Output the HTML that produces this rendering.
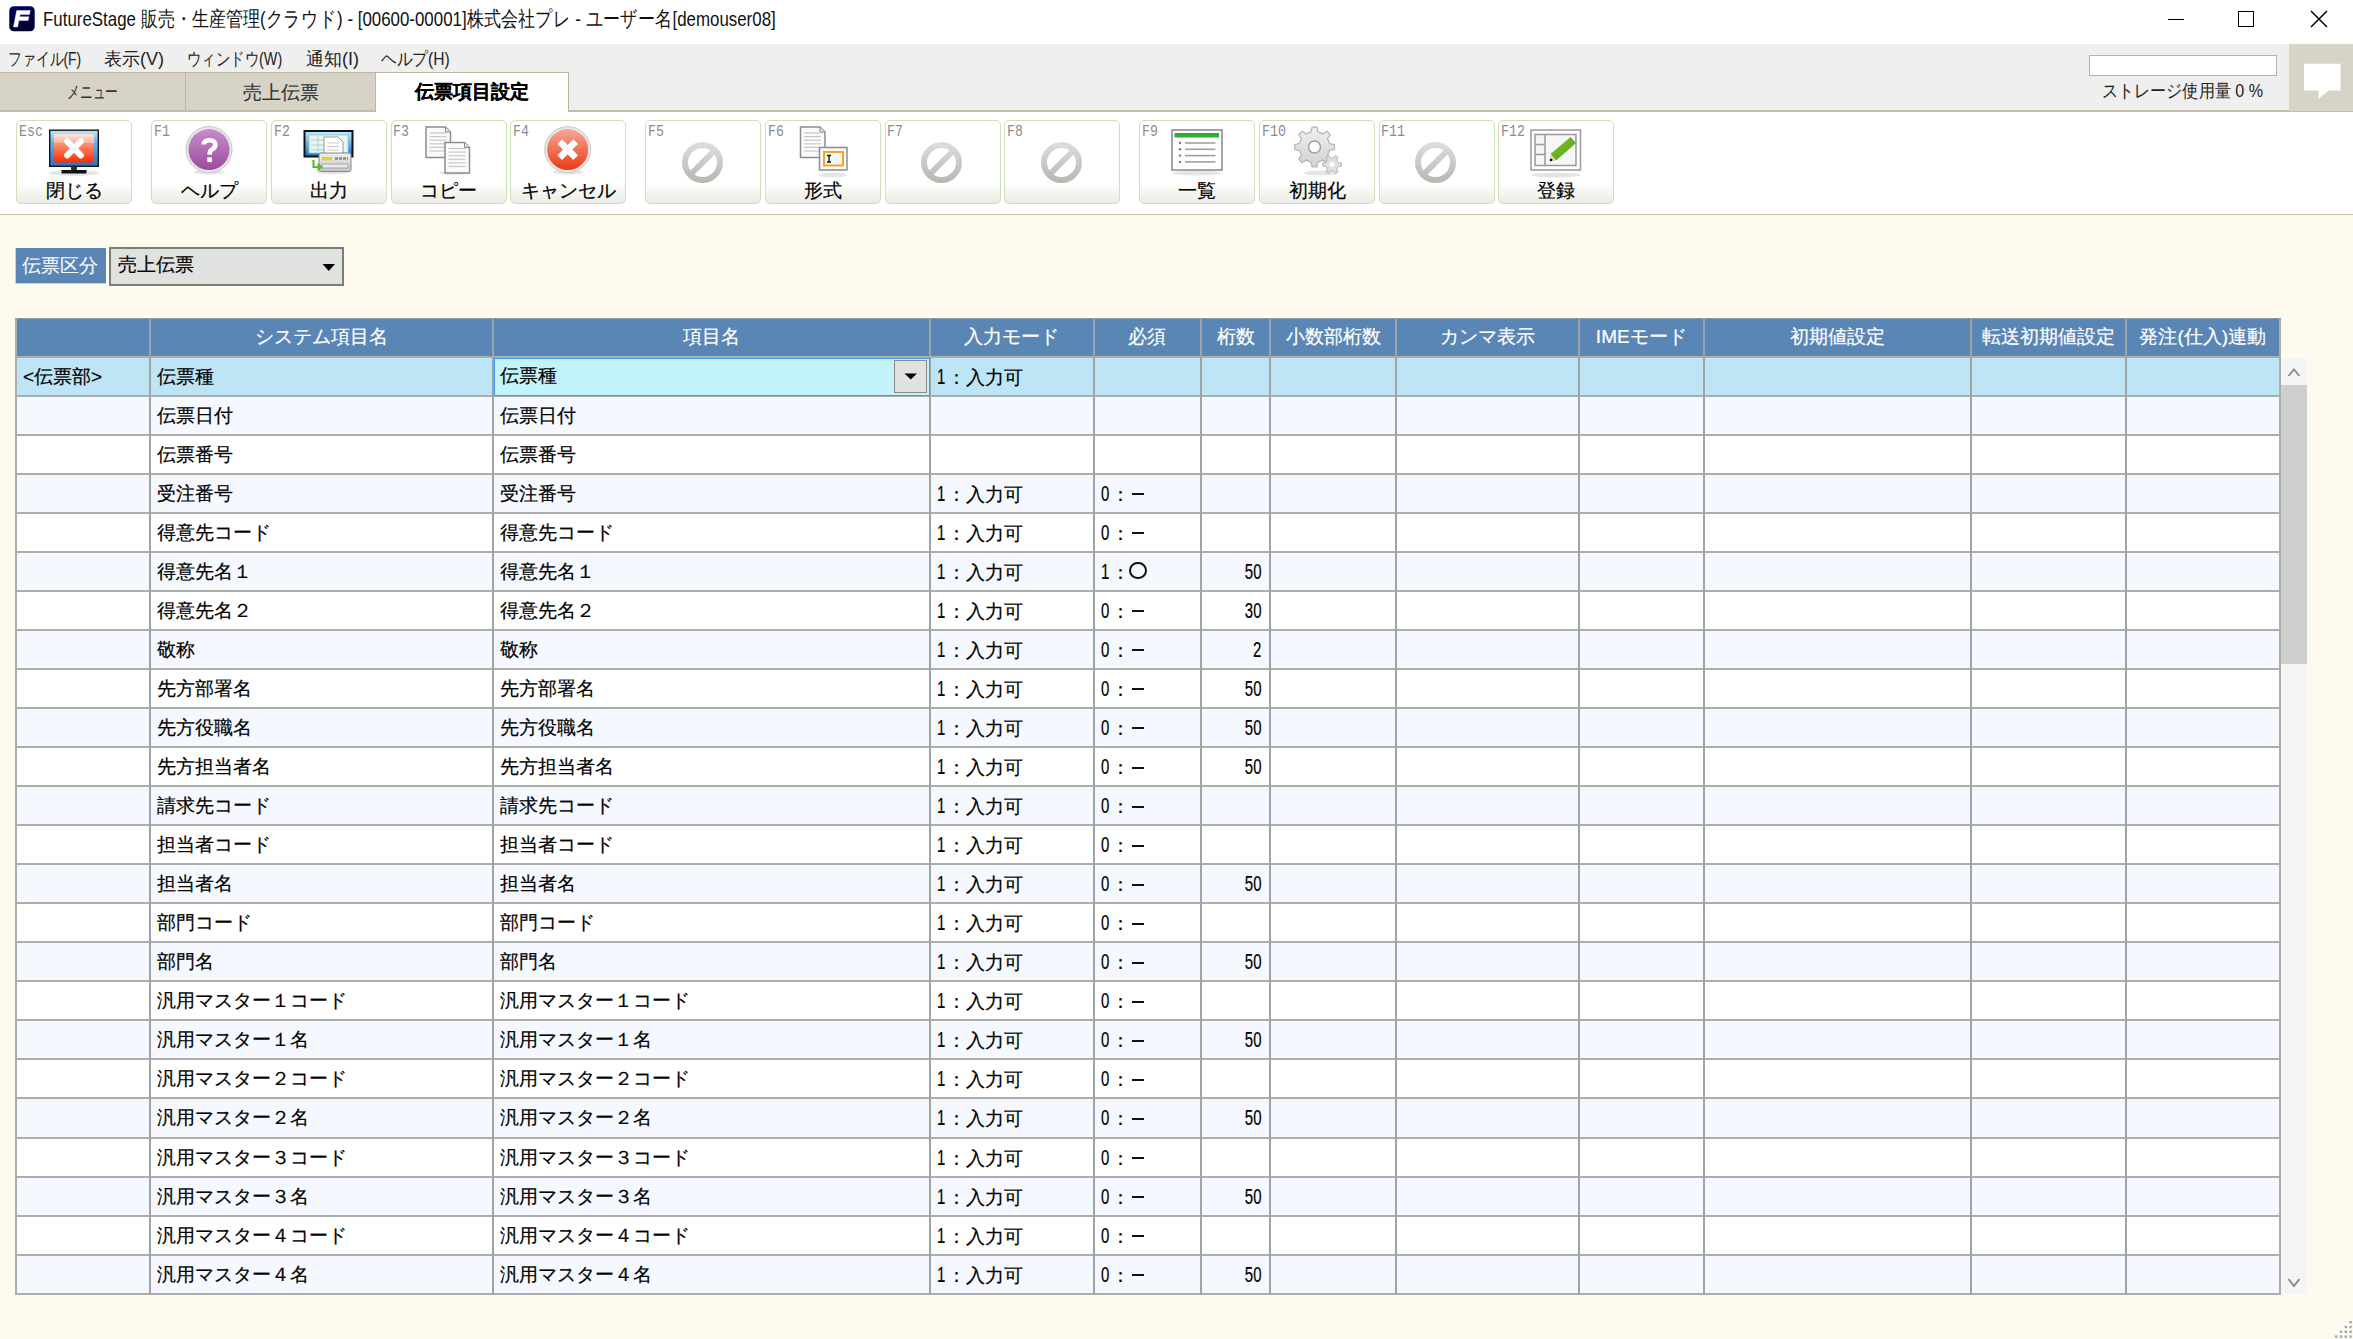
<!DOCTYPE html><html><head><meta charset="utf-8"><style>
*{box-sizing:border-box}
body{-webkit-text-stroke:0.2px currentColor;margin:0;width:2353px;height:1339px;position:relative;overflow:hidden;background:#fffaee;font-family:"Liberation Sans",sans-serif;color:#000}
.ab{position:absolute;white-space:nowrap}
.btn{position:absolute;top:120px;width:116px;height:84px;border:1.5px solid #cfe0bd;border-radius:5px;background:linear-gradient(#fff 0,#fff 76%,#f7f7f1 86%,#f1f1eb 93%,#ebeae4 100%)}
.btn .fk{position:absolute;left:1.5px;top:2.5px;font-size:17px;line-height:16px;color:#8c8c8c;font-family:"Liberation Mono",monospace;-webkit-text-stroke:0;transform:scaleX(0.78);transform-origin:0 0}
.btn .lb{position:absolute;left:0;right:0;top:59px;text-align:center;font-size:19px;line-height:22px}
.btn svg{position:absolute}
.hd{position:absolute;top:318px;height:39px;background:#5a86b5;color:#fff;font-size:19px;line-height:39px;text-align:center;white-space:nowrap;overflow:hidden}
.d{display:inline-block;width:10px;font-size:22px;transform:scaleX(0.68);transform-origin:0 50%}
.n{display:inline-block;font-size:22px;transform:scaleX(0.68);transform-origin:100% 50%}
.cell{position:absolute;height:39px;font-size:19px;line-height:39px;white-space:nowrap;overflow:hidden;padding-left:6px}
</style></head><body>
<div class="ab" style="left:0;top:0;width:2353px;height:44px;background:#fff"></div><svg class="ab" style="left:9px;top:6px" width="26" height="26" viewBox="0 0 26 26"><defs><linearGradient id="lg" x1="0" y1="0" x2="0" y2="1"><stop offset="0" stop-color="#00025a"/><stop offset="1" stop-color="#00002a"/></linearGradient></defs><rect x="0.3" y="0.3" width="25.4" height="25" rx="4.5" fill="url(#lg)"/><path d="M7.7 4.5 H21.2 L20.4 8.6 H11.08 L10.66 10.7 H19.9 L19.1 14.6 H9.88 L8.62 20.9 H4.42 Z" fill="#fff" stroke="#fff" stroke-width="0.4" stroke-linejoin="round"/></svg><div class="ab" style="left:43px;top:5px;font-size:20.8px;line-height:28px;color:#111;-webkit-text-stroke:0;transform:scaleX(0.812);transform-origin:0 0">FutureStage 販売・生産管理(クラウド) - [00600-00001]株式会社プレ - ユーザー名[demouser08]</div><div class="ab" style="left:2168px;top:19px;width:16px;height:1px;background:#000"></div><div class="ab" style="left:2238px;top:11px;width:16px;height:16px;border:1.5px solid #000"></div><svg class="ab" style="left:2310px;top:10px" width="18" height="18" viewBox="0 0 18 18"><path d="M1 1 L17 17 M17 1 L1 17" stroke="#000" stroke-width="1.5"/></svg><div class="ab" style="left:0;top:44px;width:2353px;height:67px;background:#efefef"></div><div class="ab" style="left:8px;top:47px;font-size:18px;line-height:24px;color:#222;-webkit-text-stroke:0;transform:scaleX(0.77);transform-origin:0 0">ファイル(F)</div><div class="ab" style="left:104px;top:47px;font-size:18px;line-height:24px;color:#222;-webkit-text-stroke:0;transform:scaleX(1.0);transform-origin:0 0">表示(V)</div><div class="ab" style="left:187px;top:47px;font-size:18px;line-height:24px;color:#222;-webkit-text-stroke:0;transform:scaleX(0.8);transform-origin:0 0">ウィンドウ(W)</div><div class="ab" style="left:306px;top:47px;font-size:18px;line-height:24px;color:#222;-webkit-text-stroke:0;transform:scaleX(1.0);transform-origin:0 0">通知(I)</div><div class="ab" style="left:381px;top:47px;font-size:18px;line-height:24px;color:#222;-webkit-text-stroke:0;transform:scaleX(0.87);transform-origin:0 0">ヘルプ(H)</div><div class="ab" style="left:0;top:72px;width:186px;height:40px;background:#d7d3c7;border-top:1.5px solid #bdb6a0;border-right:1.5px solid #bdb6a0"></div><div class="ab" style="left:185px;top:72px;width:191px;height:40px;background:#d7d3c7;border-top:1.5px solid #bdb6a0;border-left:1.5px solid #bdb6a0"></div><div class="ab" style="left:0;top:110px;width:2353px;height:2px;background:#c4bca6"></div><div class="ab" style="left:375px;top:72px;width:194px;height:42px;background:#fff;border:1.5px solid #bdb6a0;border-bottom:none"></div><div class="ab" style="left:67px;top:80px;font-size:18px;line-height:24px;color:#333;-webkit-text-stroke:0;transform:scaleX(0.71);transform-origin:0 0">メニュー</div><div class="ab" style="left:186px;top:81px;width:189px;text-align:center;font-size:19px;line-height:24px;color:#333;-webkit-text-stroke:0.15px #333">売上伝票</div><div class="ab" style="left:375px;top:80px;width:194px;text-align:center;font-size:19px;line-height:24px;color:#000;font-weight:bold">伝票項目設定</div><div class="ab" style="left:2089px;top:55px;width:188px;height:21px;background:#fff;border:1.5px solid #b4b4b4"></div><div class="ab" style="left:2102px;top:80px;font-size:18px;line-height:22px;color:#222;-webkit-text-stroke:0;transform:scaleX(0.894);transform-origin:0 0">ストレージ使用量 0 %</div><div class="ab" style="left:2289px;top:44px;width:64px;height:67px;background:#d7d3c7"></div><svg class="ab" style="left:2303px;top:62px" width="40" height="38" viewBox="0 0 40 38"><path d="M1 1.8 H37.5 V28.5 H25.7 L15.5 36.8 V28.5 H1 Z" fill="#fff"/></svg><div class="ab" style="left:0;top:112px;width:2353px;height:102px;background:#fff"></div><div class="ab" style="left:0;top:213.8px;width:2353px;height:1.6px;background:#c6c0aa"></div><div class="btn" style="left:16px"><span class="fk">Esc</span><svg style="left:-1.5px;top:-1.5px" width="116" height="84" viewBox="0 0 116 84"><defs><linearGradient id="blu" x1="0" y1="0" x2="0" y2="1"><stop offset="0" stop-color="#b8e4fb"/><stop offset="0.35" stop-color="#5fb0ec"/><stop offset="1" stop-color="#1e78cc"/></linearGradient><linearGradient id="red" x1="0" y1="0" x2="0" y2="1"><stop offset="0" stop-color="#ffe6de"/><stop offset="0.3" stop-color="#fcb3a0"/><stop offset="0.32" stop-color="#f8957a"/><stop offset="1" stop-color="#ff2a00"/></linearGradient></defs><ellipse cx="58" cy="53" rx="25" ry="3" fill="#000" opacity="0.10"/><rect x="33" y="9.5" width="50" height="37.5" fill="#151515"/><rect x="34.4" y="10.9" width="47.2" height="34.7" fill="url(#blu)"/><rect x="38" y="14" width="40" height="28.5" fill="url(#red)"/><rect x="55" y="47" width="6" height="3.5" fill="#333"/><rect x="45.5" y="50" width="25" height="3.5" fill="#111"/><path d="M51.2 21.4 L64.8 35.4 M64.8 21.4 L51.2 35.4" stroke="#fff" stroke-width="6.2" stroke-linecap="round"/></svg><div class="lb">閉じる</div></div><div class="btn" style="left:151px"><span class="fk">F1</span><svg style="left:-1.5px;top:-1.5px" width="116" height="84" viewBox="0 0 116 84"><defs><linearGradient id="pur" x1="0" y1="0" x2="0" y2="1"><stop offset="0" stop-color="#c88ccb"/><stop offset="1" stop-color="#9a4c9e"/></linearGradient></defs><ellipse cx="58" cy="52" rx="15" ry="2.5" fill="#000" opacity="0.10"/><circle cx="58" cy="29.6" r="23" fill="#e6e6e6" stroke="#c8c8c8" stroke-width="1"/><circle cx="58" cy="29.6" r="20.5" fill="url(#pur)"/><path d="M52.8 24.5 Q52.8 20.2 58.5 20.2 Q64.3 20.2 64.3 24.8 Q64.3 27.8 61 29.6 Q58.6 31 58.6 34.8" stroke="#fff" stroke-width="4.6" fill="none"/><rect x="56.3" y="37.3" width="4.6" height="4.8" fill="#fff"/></svg><div class="lb">ヘルプ</div></div><div class="btn" style="left:271px"><span class="fk">F2</span><svg style="left:-1.5px;top:-1.5px" width="116" height="84" viewBox="0 0 116 84"><defs><linearGradient id="blu2" x1="0" y1="0" x2="0" y2="1"><stop offset="0" stop-color="#bde6fb"/><stop offset="1" stop-color="#1e78cc"/></linearGradient><linearGradient id="gry" x1="0" y1="0" x2="0" y2="1"><stop offset="0" stop-color="#f0f0f0"/><stop offset="1" stop-color="#c4c4c4"/></linearGradient></defs><ellipse cx="62" cy="52" rx="17" ry="2.5" fill="#000" opacity="0.10"/><rect x="32.5" y="10" width="50" height="27.5" fill="#111"/><rect x="34.5" y="12" width="46" height="23.5" fill="url(#blu2)"/><rect x="38" y="15" width="39" height="18" fill="#e8f6f6" stroke="#9cc8c8" stroke-width="0.8"/><path d="M40 20 H54 M40 25 H54 M40 30 H54 M47 16 V33" stroke="#a8d4d0" stroke-width="1"/><path d="M53 17 H67 L72 22 V36 H53 Z" fill="#fff" stroke="#999" stroke-width="1"/><path d="M56 23 H68 M56 26.5 H68 M56 30 H68" stroke="#ccc" stroke-width="1"/><rect x="48" y="33" width="32" height="18.5" rx="2" fill="url(#gry)" stroke="#888" stroke-width="1"/><rect x="51" y="37" width="10" height="3.2" fill="#d8d820"/><path d="M64 38.5 H77" stroke="#888" stroke-width="2.5" stroke-dasharray="3 1"/><rect x="51" y="44" width="26" height="4" fill="#e8e8e8" stroke="#999" stroke-width="0.8"/><path d="M42.5 40 V47 H49 M46.5 44 L50 47 L46.5 50" stroke="#5cb82c" stroke-width="2.2" fill="none"/></svg><div class="lb">出力</div></div><div class="btn" style="left:390.5px"><span class="fk">F3</span><svg style="left:-1.5px;top:-1.5px" width="116" height="84" viewBox="0 0 116 84"><defs></defs><ellipse cx="64" cy="53" rx="15" ry="2.2" fill="#000" opacity="0.10"/><path d="M36 7 H55.5 L60.5 12 V37.5 H36 Z" fill="#fbfbfb" stroke="#8c8c8c" stroke-width="1.5"/><path d="M55.5 7 V12 H60.5" fill="#e0e0e0" stroke="#8c8c8c" stroke-width="1"/><path d="M39.5 13.0 H56.5" stroke="#c8c8c8" stroke-width="1.2"/><path d="M39.5 16.6 H56.5" stroke="#c8c8c8" stroke-width="1.2"/><path d="M39.5 20.2 H56.5" stroke="#c8c8c8" stroke-width="1.2"/><path d="M39.5 23.8 H56.5" stroke="#c8c8c8" stroke-width="1.2"/><path d="M39.5 27.4 H56.5" stroke="#c8c8c8" stroke-width="1.2"/><path d="M39.5 31.0 H56.5" stroke="#c8c8c8" stroke-width="1.2"/><path d="M55 22.5 H74.5 L79.5 27.5 V53.0 H55 Z" fill="#fbfbfb" stroke="#8c8c8c" stroke-width="1.5"/><path d="M74.5 22.5 V27.5 H79.5" fill="#e0e0e0" stroke="#8c8c8c" stroke-width="1"/><path d="M58.5 28.5 H75.5" stroke="#c8c8c8" stroke-width="1.2"/><path d="M58.5 32.1 H75.5" stroke="#c8c8c8" stroke-width="1.2"/><path d="M58.5 35.7 H75.5" stroke="#c8c8c8" stroke-width="1.2"/><path d="M58.5 39.3 H75.5" stroke="#c8c8c8" stroke-width="1.2"/><path d="M58.5 42.9 H75.5" stroke="#c8c8c8" stroke-width="1.2"/><path d="M58.5 46.5 H75.5" stroke="#c8c8c8" stroke-width="1.2"/></svg><div class="lb">コピー</div></div><div class="btn" style="left:510px"><span class="fk">F4</span><svg style="left:-1.5px;top:-1.5px" width="116" height="84" viewBox="0 0 116 84"><defs><linearGradient id="rd2" x1="0" y1="0" x2="0" y2="1"><stop offset="0" stop-color="#f7a898"/><stop offset="1" stop-color="#e83a14"/></linearGradient></defs><ellipse cx="58" cy="52" rx="15" ry="2.5" fill="#000" opacity="0.10"/><circle cx="57.7" cy="29.6" r="23" fill="#e6e6e6" stroke="#c8c8c8" stroke-width="1"/><circle cx="57.7" cy="29.6" r="20.5" fill="url(#rd2)"/><path d="M49.7 21.6 L65.7 37.6 M65.7 21.6 L49.7 37.6" stroke="#fff" stroke-width="6.5"/></svg><div class="lb">キャンセル</div></div><div class="btn" style="left:645px"><span class="fk">F5</span><svg style="left:-1.5px;top:-1.5px" width="116" height="84" viewBox="0 0 116 84"><defs><linearGradient id="dg" gradientUnits="userSpaceOnUse" x1="0" y1="22" x2="0" y2="63"><stop offset="0" stop-color="#dedede"/><stop offset="1" stop-color="#b4b6b4"/></linearGradient></defs><circle cx="57.5" cy="42.4" r="17.5" fill="none" stroke="url(#dg)" stroke-width="6"/><path d="M45.5 54.5 L69.5 30.5" stroke="url(#dg)" stroke-width="6"/></svg></div><div class="btn" style="left:765px"><span class="fk">F6</span><svg style="left:-1.5px;top:-1.5px" width="116" height="84" viewBox="0 0 116 84"><defs></defs><ellipse cx="68" cy="55" rx="14" ry="2.5" fill="#000" opacity="0.10"/><path d="M35.5 7 H55.0 L60.0 12 V37.5 H35.5 Z" fill="#fbfbfb" stroke="#8c8c8c" stroke-width="1.5"/><path d="M55.0 7 V12 H60.0" fill="#e0e0e0" stroke="#8c8c8c" stroke-width="1"/><path d="M39.0 13.0 H56.0" stroke="#c8c8c8" stroke-width="1.2"/><path d="M39.0 16.6 H56.0" stroke="#c8c8c8" stroke-width="1.2"/><path d="M39.0 20.2 H56.0" stroke="#c8c8c8" stroke-width="1.2"/><path d="M39.0 23.8 H56.0" stroke="#c8c8c8" stroke-width="1.2"/><path d="M39.0 27.4 H56.0" stroke="#c8c8c8" stroke-width="1.2"/><path d="M39.0 31.0 H56.0" stroke="#c8c8c8" stroke-width="1.2"/><rect x="54.5" y="27.5" width="27.5" height="22.5" fill="#fff" stroke="#8c8c8c" stroke-width="1.5"/><rect x="59" y="32" width="19" height="13.5" fill="#f0f8ff" stroke="#ffa020" stroke-width="2"/><path d="M62 35.5 H66 M64 35.5 V42 M62 42 H66" stroke="#111" stroke-width="1.3"/></svg><div class="lb">形式</div></div><div class="btn" style="left:884.5px"><span class="fk">F7</span><svg style="left:-1.5px;top:-1.5px" width="116" height="84" viewBox="0 0 116 84"><defs><linearGradient id="dg" gradientUnits="userSpaceOnUse" x1="0" y1="22" x2="0" y2="63"><stop offset="0" stop-color="#dedede"/><stop offset="1" stop-color="#b4b6b4"/></linearGradient></defs><circle cx="57.5" cy="42.4" r="17.5" fill="none" stroke="url(#dg)" stroke-width="6"/><path d="M45.5 54.5 L69.5 30.5" stroke="url(#dg)" stroke-width="6"/></svg></div><div class="btn" style="left:1004px"><span class="fk">F8</span><svg style="left:-1.5px;top:-1.5px" width="116" height="84" viewBox="0 0 116 84"><defs><linearGradient id="dg" gradientUnits="userSpaceOnUse" x1="0" y1="22" x2="0" y2="63"><stop offset="0" stop-color="#dedede"/><stop offset="1" stop-color="#b4b6b4"/></linearGradient></defs><circle cx="57.5" cy="42.4" r="17.5" fill="none" stroke="url(#dg)" stroke-width="6"/><path d="M45.5 54.5 L69.5 30.5" stroke="url(#dg)" stroke-width="6"/></svg></div><div class="btn" style="left:1139px"><span class="fk">F9</span><svg style="left:-1.5px;top:-1.5px" width="116" height="84" viewBox="0 0 116 84"><defs></defs><ellipse cx="58" cy="53" rx="25" ry="2.5" fill="#000" opacity="0.10"/><rect x="33" y="10" width="50" height="40" fill="#fff" stroke="#888" stroke-width="1.5"/><rect x="35.5" y="13" width="44.5" height="4.5" fill="#30b030"/><circle cx="41" cy="23.0" r="1.2" fill="#777"/><path d="M46 23.0 H76.5" stroke="#a0a0a0" stroke-width="1.6"/><circle cx="41" cy="29.3" r="1.2" fill="#777"/><path d="M46 29.3 H76.5" stroke="#a0a0a0" stroke-width="1.6"/><circle cx="41" cy="35.6" r="1.2" fill="#777"/><path d="M46 35.6 H76.5" stroke="#a0a0a0" stroke-width="1.6"/><circle cx="41" cy="41.9" r="1.2" fill="#777"/><path d="M46 41.9 H76.5" stroke="#a0a0a0" stroke-width="1.6"/></svg><div class="lb">一覧</div></div><div class="btn" style="left:1259px"><span class="fk">F10</span><svg style="left:-1.5px;top:-1.5px" width="116" height="84" viewBox="0 0 116 84"><defs><linearGradient id="gg" x1="0" y1="0" x2="0" y2="1"><stop offset="0" stop-color="#f0f0f0"/><stop offset="1" stop-color="#d2d2d2"/></linearGradient></defs><ellipse cx="62" cy="53" rx="17" ry="2.5" fill="#000" opacity="0.10"/><path d="M70.63 23.62 L75.34 24.49 L75.34 29.51 L70.63 30.38 L68.59 35.31 L71.30 39.26 L67.76 42.80 L63.81 40.09 L58.88 42.13 L58.01 46.84 L52.99 46.84 L52.12 42.13 L47.19 40.09 L43.24 42.80 L39.70 39.26 L42.41 35.31 L40.37 30.38 L35.66 29.51 L35.66 24.49 L40.37 23.62 L42.41 18.69 L39.70 14.74 L43.24 11.20 L47.19 13.91 L52.12 11.87 L52.99 7.16 L58.01 7.16 L58.88 11.87 L63.81 13.91 L67.76 11.20 L71.30 14.74 L68.59 18.69 Z" fill="url(#gg)" stroke="#b4b4b4" stroke-width="1.2" stroke-linejoin="round"/><circle cx="55.5" cy="27" r="6" fill="#fff" stroke="#a0a0a0" stroke-width="1.5"/><path d="M79.22 42.62 L82.37 42.92 L82.37 46.08 L79.22 46.38 L77.74 48.95 L79.06 51.82 L76.31 53.40 L74.48 50.83 L71.52 50.83 L69.69 53.40 L66.94 51.82 L68.26 48.95 L66.78 46.38 L63.63 46.08 L63.63 42.92 L66.78 42.62 L68.26 40.05 L66.94 37.18 L69.69 35.60 L71.52 38.17 L74.48 38.17 L76.31 35.60 L79.06 37.18 L77.74 40.05 Z" fill="#e0e0e0" stroke="#b4b4b4" stroke-width="1" stroke-linejoin="round"/><circle cx="73" cy="44.5" r="2.5" fill="#fff"/></svg><div class="lb">初期化</div></div><div class="btn" style="left:1378.5px"><span class="fk">F11</span><svg style="left:-1.5px;top:-1.5px" width="116" height="84" viewBox="0 0 116 84"><defs><linearGradient id="dg" gradientUnits="userSpaceOnUse" x1="0" y1="22" x2="0" y2="63"><stop offset="0" stop-color="#dedede"/><stop offset="1" stop-color="#b4b6b4"/></linearGradient></defs><circle cx="57.5" cy="42.4" r="17.5" fill="none" stroke="url(#dg)" stroke-width="6"/><path d="M45.5 54.5 L69.5 30.5" stroke="url(#dg)" stroke-width="6"/></svg></div><div class="btn" style="left:1498px"><span class="fk">F12</span><svg style="left:-1.5px;top:-1.5px" width="116" height="84" viewBox="0 0 116 84"><defs><linearGradient id="pg" x1="0" y1="0" x2="1" y2="1"><stop offset="0" stop-color="#80c830"/><stop offset="1" stop-color="#50a010"/></linearGradient></defs><ellipse cx="58" cy="55" rx="25" ry="2.5" fill="#000" opacity="0.10"/><rect x="33" y="10" width="49.5" height="40" fill="#fff" stroke="#999" stroke-width="1.5"/><rect x="37" y="14.5" width="41" height="31" fill="#f6f6f6" stroke="#999" stroke-width="1.5"/><path d="M47 14.5 V45.5 M37 24.5 H47 M37 34.5 H47" stroke="#999" stroke-width="1.5"/><path d="M52.5 34 L72.5 17 L78 23 L58 40.5 Z" fill="url(#pg)"/><path d="M53 35 L57 40.5 L52 41 Z" fill="#f0c080"/><circle cx="53" cy="40" r="1.3" fill="#000"/></svg><div class="lb">登録</div></div><div class="ab" style="left:15px;top:248px;width:91px;height:36px;background:#5a86b5;border-left:1px solid #c8d0d8;border-bottom:1px solid #c8d0d8;color:#f4f8ff;font-size:19px;line-height:35px;padding-left:6px;-webkit-text-stroke:0.15px #f4f8ff">伝票区分</div><div class="ab" style="left:108.5px;top:247px;width:235.5px;height:39px;background:#dfe2de;border:2px solid #7c7c7c;font-size:19px;line-height:32px;padding-left:7px">売上伝票</div><svg class="ab" style="left:322px;top:263px" width="14" height="9" viewBox="0 0 14 9"><path d="M0.5 1 H13 L6.75 8 Z" fill="#000"/></svg><div class="ab" style="left:16px;top:318px;width:2264px;height:38.5px;background:#5a86b5"></div><div class="ab" style="left:16px;top:318px;width:134px;height:38.5px;line-height:38.5px;text-align:center;color:#fff;font-size:19px;-webkit-text-stroke:0.2px #fff"></div><div class="ab" style="left:150px;top:318px;width:343px;height:38.5px;line-height:38.5px;text-align:center;color:#fff;font-size:19px;-webkit-text-stroke:0.2px #fff">システム項目名</div><div class="ab" style="left:493px;top:318px;width:437px;height:38.5px;line-height:38.5px;text-align:center;color:#fff;font-size:19px;-webkit-text-stroke:0.2px #fff">項目名</div><div class="ab" style="left:930px;top:318px;width:163.5px;height:38.5px;line-height:38.5px;text-align:center;color:#fff;font-size:19px;-webkit-text-stroke:0.2px #fff">入力モード</div><div class="ab" style="left:1093.5px;top:318px;width:107.5px;height:38.5px;line-height:38.5px;text-align:center;color:#fff;font-size:19px;-webkit-text-stroke:0.2px #fff">必須</div><div class="ab" style="left:1201px;top:318px;width:69px;height:38.5px;line-height:38.5px;text-align:center;color:#fff;font-size:19px;-webkit-text-stroke:0.2px #fff">桁数</div><div class="ab" style="left:1270px;top:318px;width:126px;height:38.5px;line-height:38.5px;text-align:center;color:#fff;font-size:19px;-webkit-text-stroke:0.2px #fff">小数部桁数</div><div class="ab" style="left:1396px;top:318px;width:182.5px;height:38.5px;line-height:38.5px;text-align:center;color:#fff;font-size:19px;-webkit-text-stroke:0.2px #fff">カンマ表示</div><div class="ab" style="left:1578.5px;top:318px;width:125.5px;height:38.5px;line-height:38.5px;text-align:center;color:#fff;font-size:19px;-webkit-text-stroke:0.2px #fff">IMEモード</div><div class="ab" style="left:1704px;top:318px;width:267px;height:38.5px;line-height:38.5px;text-align:center;color:#fff;font-size:19px;-webkit-text-stroke:0.2px #fff">初期値設定</div><div class="ab" style="left:1971px;top:318px;width:154.5px;height:38.5px;line-height:38.5px;text-align:center;color:#fff;font-size:19px;-webkit-text-stroke:0.2px #fff">転送初期値設定</div><div class="ab" style="left:2125.5px;top:318px;width:154.5px;height:38.5px;line-height:38.5px;text-align:center;color:#fff;font-size:19px;-webkit-text-stroke:0.2px #fff">発注(仕入)連動</div><div class="ab" style="left:16px;top:356.50px;width:2264px;height:39.05px;background:#bde5f5"></div><div class="ab" style="left:16px;top:395.55px;width:2264px;height:39.05px;background:#f5f9ff"></div><div class="ab" style="left:16px;top:434.60px;width:2264px;height:39.05px;background:#ffffff"></div><div class="ab" style="left:16px;top:473.65px;width:2264px;height:39.05px;background:#f5f9ff"></div><div class="ab" style="left:16px;top:512.70px;width:2264px;height:39.05px;background:#ffffff"></div><div class="ab" style="left:16px;top:551.75px;width:2264px;height:39.05px;background:#f5f9ff"></div><div class="ab" style="left:16px;top:590.80px;width:2264px;height:39.05px;background:#ffffff"></div><div class="ab" style="left:16px;top:629.85px;width:2264px;height:39.05px;background:#f5f9ff"></div><div class="ab" style="left:16px;top:668.90px;width:2264px;height:39.05px;background:#ffffff"></div><div class="ab" style="left:16px;top:707.95px;width:2264px;height:39.05px;background:#f5f9ff"></div><div class="ab" style="left:16px;top:747.00px;width:2264px;height:39.05px;background:#ffffff"></div><div class="ab" style="left:16px;top:786.05px;width:2264px;height:39.05px;background:#f5f9ff"></div><div class="ab" style="left:16px;top:825.10px;width:2264px;height:39.05px;background:#ffffff"></div><div class="ab" style="left:16px;top:864.15px;width:2264px;height:39.05px;background:#f5f9ff"></div><div class="ab" style="left:16px;top:903.20px;width:2264px;height:39.05px;background:#ffffff"></div><div class="ab" style="left:16px;top:942.25px;width:2264px;height:39.05px;background:#f5f9ff"></div><div class="ab" style="left:16px;top:981.30px;width:2264px;height:39.05px;background:#ffffff"></div><div class="ab" style="left:16px;top:1020.35px;width:2264px;height:39.05px;background:#f5f9ff"></div><div class="ab" style="left:16px;top:1059.40px;width:2264px;height:39.05px;background:#ffffff"></div><div class="ab" style="left:16px;top:1098.45px;width:2264px;height:39.05px;background:#f5f9ff"></div><div class="ab" style="left:16px;top:1137.50px;width:2264px;height:39.05px;background:#ffffff"></div><div class="ab" style="left:16px;top:1176.55px;width:2264px;height:39.05px;background:#f5f9ff"></div><div class="ab" style="left:16px;top:1215.60px;width:2264px;height:39.05px;background:#ffffff"></div><div class="ab" style="left:16px;top:1254.65px;width:2264px;height:39.05px;background:#f5f9ff"></div><div class="ab" style="left:23px;top:356.50px;height:39.05px;line-height:39.05px;font-size:19px">&lt;伝票部&gt;</div><div class="ab" style="left:157px;top:356.50px;height:39.05px;line-height:39.05px;font-size:19px">伝票種</div><div class="ab" style="left:500px;top:356.50px;height:39.05px;line-height:39.05px;font-size:19px">伝票種</div><div class="ab" style="left:937px;top:356.50px;height:39.05px;line-height:39.05px;font-size:19px"><span class="d">1</span>：入力可</div><div class="ab" style="left:157px;top:395.55px;height:39.05px;line-height:39.05px;font-size:19px">伝票日付</div><div class="ab" style="left:500px;top:395.55px;height:39.05px;line-height:39.05px;font-size:19px">伝票日付</div><div class="ab" style="left:157px;top:434.60px;height:39.05px;line-height:39.05px;font-size:19px">伝票番号</div><div class="ab" style="left:500px;top:434.60px;height:39.05px;line-height:39.05px;font-size:19px">伝票番号</div><div class="ab" style="left:157px;top:473.65px;height:39.05px;line-height:39.05px;font-size:19px">受注番号</div><div class="ab" style="left:500px;top:473.65px;height:39.05px;line-height:39.05px;font-size:19px">受注番号</div><div class="ab" style="left:937px;top:473.65px;height:39.05px;line-height:39.05px;font-size:19px"><span class="d">1</span>：入力可</div><div class="ab" style="left:1100.5px;top:473.65px;height:39.05px;line-height:39.05px;font-size:19px"><span class="d">0</span>：</div><div class="ab" style="left:1132px;top:493.15px;width:11.5px;height:2px;background:#111"></div><div class="ab" style="left:157px;top:512.70px;height:39.05px;line-height:39.05px;font-size:19px">得意先コード</div><div class="ab" style="left:500px;top:512.70px;height:39.05px;line-height:39.05px;font-size:19px">得意先コード</div><div class="ab" style="left:937px;top:512.70px;height:39.05px;line-height:39.05px;font-size:19px"><span class="d">1</span>：入力可</div><div class="ab" style="left:1100.5px;top:512.70px;height:39.05px;line-height:39.05px;font-size:19px"><span class="d">0</span>：</div><div class="ab" style="left:1132px;top:532.20px;width:11.5px;height:2px;background:#111"></div><div class="ab" style="left:157px;top:551.75px;height:39.05px;line-height:39.05px;font-size:19px">得意先名１</div><div class="ab" style="left:500px;top:551.75px;height:39.05px;line-height:39.05px;font-size:19px">得意先名１</div><div class="ab" style="left:937px;top:551.75px;height:39.05px;line-height:39.05px;font-size:19px"><span class="d">1</span>：入力可</div><div class="ab" style="left:1100.5px;top:551.75px;height:39.05px;line-height:39.05px;font-size:19px"><span class="d">1</span>：</div><div class="ab" style="left:1129px;top:561.75px;width:17.5px;height:17.5px;border:2.1px solid #111;border-radius:50%"></div><div class="ab" style="left:1201px;width:60px;top:551.75px;height:39.05px;line-height:39.05px;font-size:19px;text-align:right"><span class="n">50</span></div><div class="ab" style="left:157px;top:590.80px;height:39.05px;line-height:39.05px;font-size:19px">得意先名２</div><div class="ab" style="left:500px;top:590.80px;height:39.05px;line-height:39.05px;font-size:19px">得意先名２</div><div class="ab" style="left:937px;top:590.80px;height:39.05px;line-height:39.05px;font-size:19px"><span class="d">1</span>：入力可</div><div class="ab" style="left:1100.5px;top:590.80px;height:39.05px;line-height:39.05px;font-size:19px"><span class="d">0</span>：</div><div class="ab" style="left:1132px;top:610.30px;width:11.5px;height:2px;background:#111"></div><div class="ab" style="left:1201px;width:60px;top:590.80px;height:39.05px;line-height:39.05px;font-size:19px;text-align:right"><span class="n">30</span></div><div class="ab" style="left:157px;top:629.85px;height:39.05px;line-height:39.05px;font-size:19px">敬称</div><div class="ab" style="left:500px;top:629.85px;height:39.05px;line-height:39.05px;font-size:19px">敬称</div><div class="ab" style="left:937px;top:629.85px;height:39.05px;line-height:39.05px;font-size:19px"><span class="d">1</span>：入力可</div><div class="ab" style="left:1100.5px;top:629.85px;height:39.05px;line-height:39.05px;font-size:19px"><span class="d">0</span>：</div><div class="ab" style="left:1132px;top:649.35px;width:11.5px;height:2px;background:#111"></div><div class="ab" style="left:1201px;width:60px;top:629.85px;height:39.05px;line-height:39.05px;font-size:19px;text-align:right"><span class="n">2</span></div><div class="ab" style="left:157px;top:668.90px;height:39.05px;line-height:39.05px;font-size:19px">先方部署名</div><div class="ab" style="left:500px;top:668.90px;height:39.05px;line-height:39.05px;font-size:19px">先方部署名</div><div class="ab" style="left:937px;top:668.90px;height:39.05px;line-height:39.05px;font-size:19px"><span class="d">1</span>：入力可</div><div class="ab" style="left:1100.5px;top:668.90px;height:39.05px;line-height:39.05px;font-size:19px"><span class="d">0</span>：</div><div class="ab" style="left:1132px;top:688.40px;width:11.5px;height:2px;background:#111"></div><div class="ab" style="left:1201px;width:60px;top:668.90px;height:39.05px;line-height:39.05px;font-size:19px;text-align:right"><span class="n">50</span></div><div class="ab" style="left:157px;top:707.95px;height:39.05px;line-height:39.05px;font-size:19px">先方役職名</div><div class="ab" style="left:500px;top:707.95px;height:39.05px;line-height:39.05px;font-size:19px">先方役職名</div><div class="ab" style="left:937px;top:707.95px;height:39.05px;line-height:39.05px;font-size:19px"><span class="d">1</span>：入力可</div><div class="ab" style="left:1100.5px;top:707.95px;height:39.05px;line-height:39.05px;font-size:19px"><span class="d">0</span>：</div><div class="ab" style="left:1132px;top:727.45px;width:11.5px;height:2px;background:#111"></div><div class="ab" style="left:1201px;width:60px;top:707.95px;height:39.05px;line-height:39.05px;font-size:19px;text-align:right"><span class="n">50</span></div><div class="ab" style="left:157px;top:747.00px;height:39.05px;line-height:39.05px;font-size:19px">先方担当者名</div><div class="ab" style="left:500px;top:747.00px;height:39.05px;line-height:39.05px;font-size:19px">先方担当者名</div><div class="ab" style="left:937px;top:747.00px;height:39.05px;line-height:39.05px;font-size:19px"><span class="d">1</span>：入力可</div><div class="ab" style="left:1100.5px;top:747.00px;height:39.05px;line-height:39.05px;font-size:19px"><span class="d">0</span>：</div><div class="ab" style="left:1132px;top:766.50px;width:11.5px;height:2px;background:#111"></div><div class="ab" style="left:1201px;width:60px;top:747.00px;height:39.05px;line-height:39.05px;font-size:19px;text-align:right"><span class="n">50</span></div><div class="ab" style="left:157px;top:786.05px;height:39.05px;line-height:39.05px;font-size:19px">請求先コード</div><div class="ab" style="left:500px;top:786.05px;height:39.05px;line-height:39.05px;font-size:19px">請求先コード</div><div class="ab" style="left:937px;top:786.05px;height:39.05px;line-height:39.05px;font-size:19px"><span class="d">1</span>：入力可</div><div class="ab" style="left:1100.5px;top:786.05px;height:39.05px;line-height:39.05px;font-size:19px"><span class="d">0</span>：</div><div class="ab" style="left:1132px;top:805.55px;width:11.5px;height:2px;background:#111"></div><div class="ab" style="left:157px;top:825.10px;height:39.05px;line-height:39.05px;font-size:19px">担当者コード</div><div class="ab" style="left:500px;top:825.10px;height:39.05px;line-height:39.05px;font-size:19px">担当者コード</div><div class="ab" style="left:937px;top:825.10px;height:39.05px;line-height:39.05px;font-size:19px"><span class="d">1</span>：入力可</div><div class="ab" style="left:1100.5px;top:825.10px;height:39.05px;line-height:39.05px;font-size:19px"><span class="d">0</span>：</div><div class="ab" style="left:1132px;top:844.60px;width:11.5px;height:2px;background:#111"></div><div class="ab" style="left:157px;top:864.15px;height:39.05px;line-height:39.05px;font-size:19px">担当者名</div><div class="ab" style="left:500px;top:864.15px;height:39.05px;line-height:39.05px;font-size:19px">担当者名</div><div class="ab" style="left:937px;top:864.15px;height:39.05px;line-height:39.05px;font-size:19px"><span class="d">1</span>：入力可</div><div class="ab" style="left:1100.5px;top:864.15px;height:39.05px;line-height:39.05px;font-size:19px"><span class="d">0</span>：</div><div class="ab" style="left:1132px;top:883.65px;width:11.5px;height:2px;background:#111"></div><div class="ab" style="left:1201px;width:60px;top:864.15px;height:39.05px;line-height:39.05px;font-size:19px;text-align:right"><span class="n">50</span></div><div class="ab" style="left:157px;top:903.20px;height:39.05px;line-height:39.05px;font-size:19px">部門コード</div><div class="ab" style="left:500px;top:903.20px;height:39.05px;line-height:39.05px;font-size:19px">部門コード</div><div class="ab" style="left:937px;top:903.20px;height:39.05px;line-height:39.05px;font-size:19px"><span class="d">1</span>：入力可</div><div class="ab" style="left:1100.5px;top:903.20px;height:39.05px;line-height:39.05px;font-size:19px"><span class="d">0</span>：</div><div class="ab" style="left:1132px;top:922.70px;width:11.5px;height:2px;background:#111"></div><div class="ab" style="left:157px;top:942.25px;height:39.05px;line-height:39.05px;font-size:19px">部門名</div><div class="ab" style="left:500px;top:942.25px;height:39.05px;line-height:39.05px;font-size:19px">部門名</div><div class="ab" style="left:937px;top:942.25px;height:39.05px;line-height:39.05px;font-size:19px"><span class="d">1</span>：入力可</div><div class="ab" style="left:1100.5px;top:942.25px;height:39.05px;line-height:39.05px;font-size:19px"><span class="d">0</span>：</div><div class="ab" style="left:1132px;top:961.75px;width:11.5px;height:2px;background:#111"></div><div class="ab" style="left:1201px;width:60px;top:942.25px;height:39.05px;line-height:39.05px;font-size:19px;text-align:right"><span class="n">50</span></div><div class="ab" style="left:157px;top:981.30px;height:39.05px;line-height:39.05px;font-size:19px">汎用マスター１コード</div><div class="ab" style="left:500px;top:981.30px;height:39.05px;line-height:39.05px;font-size:19px">汎用マスター１コード</div><div class="ab" style="left:937px;top:981.30px;height:39.05px;line-height:39.05px;font-size:19px"><span class="d">1</span>：入力可</div><div class="ab" style="left:1100.5px;top:981.30px;height:39.05px;line-height:39.05px;font-size:19px"><span class="d">0</span>：</div><div class="ab" style="left:1132px;top:1000.80px;width:11.5px;height:2px;background:#111"></div><div class="ab" style="left:157px;top:1020.35px;height:39.05px;line-height:39.05px;font-size:19px">汎用マスター１名</div><div class="ab" style="left:500px;top:1020.35px;height:39.05px;line-height:39.05px;font-size:19px">汎用マスター１名</div><div class="ab" style="left:937px;top:1020.35px;height:39.05px;line-height:39.05px;font-size:19px"><span class="d">1</span>：入力可</div><div class="ab" style="left:1100.5px;top:1020.35px;height:39.05px;line-height:39.05px;font-size:19px"><span class="d">0</span>：</div><div class="ab" style="left:1132px;top:1039.85px;width:11.5px;height:2px;background:#111"></div><div class="ab" style="left:1201px;width:60px;top:1020.35px;height:39.05px;line-height:39.05px;font-size:19px;text-align:right"><span class="n">50</span></div><div class="ab" style="left:157px;top:1059.40px;height:39.05px;line-height:39.05px;font-size:19px">汎用マスター２コード</div><div class="ab" style="left:500px;top:1059.40px;height:39.05px;line-height:39.05px;font-size:19px">汎用マスター２コード</div><div class="ab" style="left:937px;top:1059.40px;height:39.05px;line-height:39.05px;font-size:19px"><span class="d">1</span>：入力可</div><div class="ab" style="left:1100.5px;top:1059.40px;height:39.05px;line-height:39.05px;font-size:19px"><span class="d">0</span>：</div><div class="ab" style="left:1132px;top:1078.90px;width:11.5px;height:2px;background:#111"></div><div class="ab" style="left:157px;top:1098.45px;height:39.05px;line-height:39.05px;font-size:19px">汎用マスター２名</div><div class="ab" style="left:500px;top:1098.45px;height:39.05px;line-height:39.05px;font-size:19px">汎用マスター２名</div><div class="ab" style="left:937px;top:1098.45px;height:39.05px;line-height:39.05px;font-size:19px"><span class="d">1</span>：入力可</div><div class="ab" style="left:1100.5px;top:1098.45px;height:39.05px;line-height:39.05px;font-size:19px"><span class="d">0</span>：</div><div class="ab" style="left:1132px;top:1117.95px;width:11.5px;height:2px;background:#111"></div><div class="ab" style="left:1201px;width:60px;top:1098.45px;height:39.05px;line-height:39.05px;font-size:19px;text-align:right"><span class="n">50</span></div><div class="ab" style="left:157px;top:1137.50px;height:39.05px;line-height:39.05px;font-size:19px">汎用マスター３コード</div><div class="ab" style="left:500px;top:1137.50px;height:39.05px;line-height:39.05px;font-size:19px">汎用マスター３コード</div><div class="ab" style="left:937px;top:1137.50px;height:39.05px;line-height:39.05px;font-size:19px"><span class="d">1</span>：入力可</div><div class="ab" style="left:1100.5px;top:1137.50px;height:39.05px;line-height:39.05px;font-size:19px"><span class="d">0</span>：</div><div class="ab" style="left:1132px;top:1157.00px;width:11.5px;height:2px;background:#111"></div><div class="ab" style="left:157px;top:1176.55px;height:39.05px;line-height:39.05px;font-size:19px">汎用マスター３名</div><div class="ab" style="left:500px;top:1176.55px;height:39.05px;line-height:39.05px;font-size:19px">汎用マスター３名</div><div class="ab" style="left:937px;top:1176.55px;height:39.05px;line-height:39.05px;font-size:19px"><span class="d">1</span>：入力可</div><div class="ab" style="left:1100.5px;top:1176.55px;height:39.05px;line-height:39.05px;font-size:19px"><span class="d">0</span>：</div><div class="ab" style="left:1132px;top:1196.05px;width:11.5px;height:2px;background:#111"></div><div class="ab" style="left:1201px;width:60px;top:1176.55px;height:39.05px;line-height:39.05px;font-size:19px;text-align:right"><span class="n">50</span></div><div class="ab" style="left:157px;top:1215.60px;height:39.05px;line-height:39.05px;font-size:19px">汎用マスター４コード</div><div class="ab" style="left:500px;top:1215.60px;height:39.05px;line-height:39.05px;font-size:19px">汎用マスター４コード</div><div class="ab" style="left:937px;top:1215.60px;height:39.05px;line-height:39.05px;font-size:19px"><span class="d">1</span>：入力可</div><div class="ab" style="left:1100.5px;top:1215.60px;height:39.05px;line-height:39.05px;font-size:19px"><span class="d">0</span>：</div><div class="ab" style="left:1132px;top:1235.10px;width:11.5px;height:2px;background:#111"></div><div class="ab" style="left:157px;top:1254.65px;height:39.05px;line-height:39.05px;font-size:19px">汎用マスター４名</div><div class="ab" style="left:500px;top:1254.65px;height:39.05px;line-height:39.05px;font-size:19px">汎用マスター４名</div><div class="ab" style="left:937px;top:1254.65px;height:39.05px;line-height:39.05px;font-size:19px"><span class="d">1</span>：入力可</div><div class="ab" style="left:1100.5px;top:1254.65px;height:39.05px;line-height:39.05px;font-size:19px"><span class="d">0</span>：</div><div class="ab" style="left:1132px;top:1274.15px;width:11.5px;height:2px;background:#111"></div><div class="ab" style="left:1201px;width:60px;top:1254.65px;height:39.05px;line-height:39.05px;font-size:19px;text-align:right"><span class="n">50</span></div><div class="ab" style="left:16px;top:355.50px;width:2264px;height:2px;background:#acaeab"></div><div class="ab" style="left:16px;top:394.55px;width:2264px;height:2px;background:#acaeab"></div><div class="ab" style="left:16px;top:433.60px;width:2264px;height:2px;background:#acaeab"></div><div class="ab" style="left:16px;top:472.65px;width:2264px;height:2px;background:#acaeab"></div><div class="ab" style="left:16px;top:511.70px;width:2264px;height:2px;background:#acaeab"></div><div class="ab" style="left:16px;top:550.75px;width:2264px;height:2px;background:#acaeab"></div><div class="ab" style="left:16px;top:589.80px;width:2264px;height:2px;background:#acaeab"></div><div class="ab" style="left:16px;top:628.85px;width:2264px;height:2px;background:#acaeab"></div><div class="ab" style="left:16px;top:667.90px;width:2264px;height:2px;background:#acaeab"></div><div class="ab" style="left:16px;top:706.95px;width:2264px;height:2px;background:#acaeab"></div><div class="ab" style="left:16px;top:746.00px;width:2264px;height:2px;background:#acaeab"></div><div class="ab" style="left:16px;top:785.05px;width:2264px;height:2px;background:#acaeab"></div><div class="ab" style="left:16px;top:824.10px;width:2264px;height:2px;background:#acaeab"></div><div class="ab" style="left:16px;top:863.15px;width:2264px;height:2px;background:#acaeab"></div><div class="ab" style="left:16px;top:902.20px;width:2264px;height:2px;background:#acaeab"></div><div class="ab" style="left:16px;top:941.25px;width:2264px;height:2px;background:#acaeab"></div><div class="ab" style="left:16px;top:980.30px;width:2264px;height:2px;background:#acaeab"></div><div class="ab" style="left:16px;top:1019.35px;width:2264px;height:2px;background:#acaeab"></div><div class="ab" style="left:16px;top:1058.40px;width:2264px;height:2px;background:#acaeab"></div><div class="ab" style="left:16px;top:1097.45px;width:2264px;height:2px;background:#acaeab"></div><div class="ab" style="left:16px;top:1136.50px;width:2264px;height:2px;background:#acaeab"></div><div class="ab" style="left:16px;top:1175.55px;width:2264px;height:2px;background:#acaeab"></div><div class="ab" style="left:16px;top:1214.60px;width:2264px;height:2px;background:#acaeab"></div><div class="ab" style="left:16px;top:1253.65px;width:2264px;height:2px;background:#acaeab"></div><div class="ab" style="left:16px;top:1292.70px;width:2264px;height:2px;background:#acaeab"></div><div class="ab" style="left:149px;top:318px;width:2px;height:975.70px;background:#9fa4a6"></div><div class="ab" style="left:492px;top:318px;width:2px;height:975.70px;background:#9fa4a6"></div><div class="ab" style="left:929px;top:318px;width:2px;height:975.70px;background:#9fa4a6"></div><div class="ab" style="left:1092.5px;top:318px;width:2px;height:975.70px;background:#9fa4a6"></div><div class="ab" style="left:1200px;top:318px;width:2px;height:975.70px;background:#9fa4a6"></div><div class="ab" style="left:1269px;top:318px;width:2px;height:975.70px;background:#9fa4a6"></div><div class="ab" style="left:1395px;top:318px;width:2px;height:975.70px;background:#9fa4a6"></div><div class="ab" style="left:1577.5px;top:318px;width:2px;height:975.70px;background:#9fa4a6"></div><div class="ab" style="left:1703px;top:318px;width:2px;height:975.70px;background:#9fa4a6"></div><div class="ab" style="left:1970px;top:318px;width:2px;height:975.70px;background:#9fa4a6"></div><div class="ab" style="left:2124.5px;top:318px;width:2px;height:975.70px;background:#9fa4a6"></div><div class="ab" style="left:15px;top:318px;width:2px;height:976.70px;background:#acaeab"></div><div class="ab" style="left:2279px;top:318px;width:2px;height:976.70px;background:#acaeab"></div><div class="ab" style="left:15px;top:317.5px;width:2266px;height:1px;background:#8a9cae"></div><div class="ab" style="left:493.5px;top:358px;width:436px;height:37.5px;background:#c4f4fb;border:1.5px solid #3d9cf0;font-size:19px;line-height:34.5px;padding-left:5px">伝票種</div><div class="ab" style="left:894px;top:360px;width:33px;height:33px;background:#dfe2de;border:1.5px solid #8a8a8a"></div><svg class="ab" style="left:904px;top:373px" width="14" height="7" viewBox="0 0 14 7"><path d="M0.5 0.5 H13 L6.75 6.5 Z" fill="#000"/></svg><div class="ab" style="left:2281px;top:357.5px;width:26px;height:936.20px;background:#f5f5f5"></div><div class="ab" style="left:2281px;top:384.5px;width:26px;height:279.5px;background:#cdd0cc"></div><svg class="ab" style="left:2287px;top:367px" width="14" height="12" viewBox="0 0 14 12"><path d="M1.5 9 L7 2.5 L12.5 9" stroke="#8a8a8a" stroke-width="1.8" fill="none"/></svg><svg class="ab" style="left:2287px;top:1277px" width="14" height="12" viewBox="0 0 14 12"><path d="M1.5 2 L7 9 L12.5 2" stroke="#8a8a8a" stroke-width="2" fill="none"/></svg><svg class="ab" style="left:2335px;top:1320.5px" width="18" height="18" viewBox="0 0 18 18"><rect x="14.4" y="0.0" width="2.4" height="2.4" fill="#9aa8c0"/><rect x="9.6" y="4.8" width="2.4" height="2.4" fill="#9aa8c0"/><rect x="14.4" y="4.8" width="2.4" height="2.4" fill="#9aa8c0"/><rect x="4.8" y="9.6" width="2.4" height="2.4" fill="#9aa8c0"/><rect x="9.6" y="9.6" width="2.4" height="2.4" fill="#9aa8c0"/><rect x="14.4" y="9.6" width="2.4" height="2.4" fill="#9aa8c0"/><rect x="0.0" y="14.4" width="2.4" height="2.4" fill="#9aa8c0"/><rect x="4.8" y="14.4" width="2.4" height="2.4" fill="#9aa8c0"/><rect x="9.6" y="14.4" width="2.4" height="2.4" fill="#9aa8c0"/><rect x="14.4" y="14.4" width="2.4" height="2.4" fill="#9aa8c0"/></svg></body></html>
